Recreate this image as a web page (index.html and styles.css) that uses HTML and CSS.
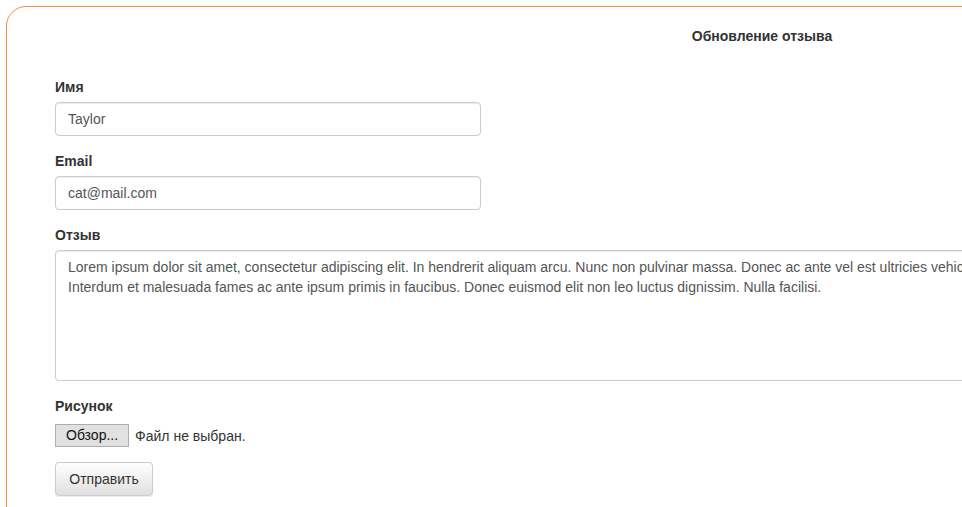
FILE: index.html
```html
<!DOCTYPE html>
<html lang="ru">
<head>
<meta charset="utf-8">
<title>Обновление отзыва</title>
<link rel="stylesheet" href="styles.css">
</head>
<body>
<div class="card">
  <h2 class="title">Обновление отзыва</h2>
  <form class="form">
    <div class="group">
      <label class="label" for="name">Имя</label>
      <input class="field short" id="name" type="text" value="Taylor">
    </div>
    <div class="group">
      <label class="label" for="email">Email</label>
      <input class="field short" id="email" type="text" value="cat@mail.com">
    </div>
    <div class="group">
      <label class="label" for="review">Отзыв</label>
      <textarea class="field area" id="review">Lorem ipsum dolor sit amet, consectetur adipiscing elit. In hendrerit aliquam arcu. Nunc non pulvinar massa. Donec ac ante vel est ultricies vehicula.
Interdum et malesuada fames ac ante ipsum primis in faucibus. Donec euismod elit non leo luctus dignissim. Nulla facilisi.</textarea>
    </div>
    <div class="group">
      <span class="label">Рисунок</span>
      <div class="file">
        <span class="file-btn">Обзор...</span>
        <span class="file-text">Файл не выбран.</span>
      </div>
    </div>
    <button class="btn" type="button">Отправить</button>
  </form>
</div>
</body>
</html>
```

FILE: styles.css
```css
html, body {
  margin: 0;
  padding: 0;
  overflow: hidden;
  background: #fff;
}
body {
  font-family: "Liberation Sans", Arial, Helvetica, sans-serif;
  font-size: 14px;
  line-height: 20px;
  color: #333;
}
.card {
  margin: 6px 0 0 6px;
  width: 1512px;
  min-height: 700px;
  border: 1px solid #e8923e;
  border-radius: 20px;
  padding: 19px 48px 20px 48px;
  box-sizing: border-box;
}
.title {
  margin: 0 0 31px 0;
  font-size: 14px;
  font-weight: bold;
  line-height: 20px;
  text-align: center;
  color: #333;
}
.form {
  display: flex;
  flex-direction: column;
  align-items: flex-start;
}
.group {
  display: flex;
  flex-direction: column;
  align-items: flex-start;
  margin-bottom: 15px;
  width: 100%;
}
.label {
  display: block;
  font-weight: bold;
  margin-bottom: 5px;
  line-height: 20px;
}
.field {
  box-sizing: border-box;
  font-family: "Liberation Sans", Arial, Helvetica, sans-serif;
  font-size: 14px;
  line-height: 20px;
  color: #555;
  background: #fff;
  border: 1px solid #ccc;
  border-radius: 4px;
  padding: 6px 12px;
  box-shadow: inset 0 1px 1px rgba(0,0,0,0.075);
  outline: none;
  margin: 0;
}
.short {
  width: 426px;
  height: 34px;
}
.area {
  width: 100%;
  height: 131px;
  resize: none;
  overflow: hidden;
}
.file {
  display: flex;
  align-items: center;
  gap: 6px;
  margin-top: 3px;
}
.file-btn {
  box-sizing: border-box;
  display: inline-block;
  height: 23px;
  line-height: 21px;
  padding: 0 10px;
  border: 1px solid #adadad;
  background: #e1e1e1;
  color: #111;
  font-size: 14px;
}
.file-text {
  color: #333;
}
.btn {
  box-sizing: border-box;
  height: 34px;
  width: 98px;
  padding: 6px 12px;
  font-family: "Liberation Sans", Arial, Helvetica, sans-serif;
  font-size: 14px;
  line-height: 20px;
  color: #333;
  border: 1px solid #ccc;
  border-radius: 4px;
  background: linear-gradient(to bottom, #fff 0%, #e0e0e0 100%);
  box-shadow: inset 0 1px 0 rgba(255,255,255,0.15), 0 1px 1px rgba(0,0,0,0.075);
}
```
